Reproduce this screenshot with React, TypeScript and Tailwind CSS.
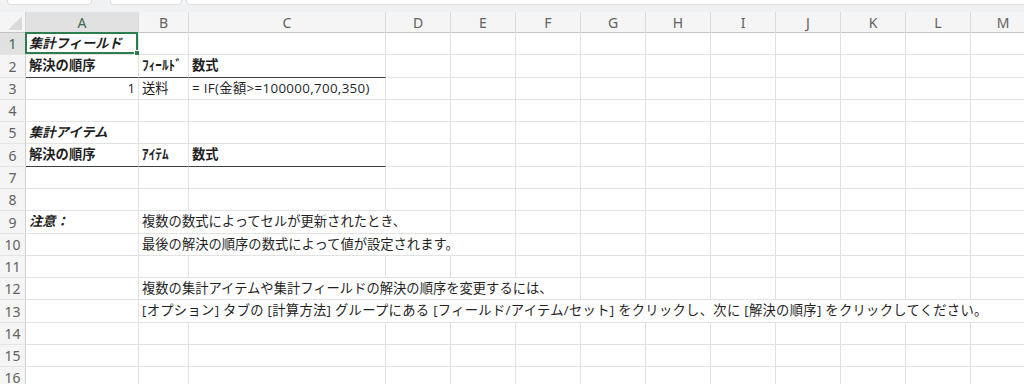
import React from 'react';

// One cell of the sheet: span = how many columns the content runs over
type Cell = { span?: number; text?: React.ReactNode; cls?: string; sel?: boolean };

interface SheetRow {
  h: number;
  cells: Cell[];
}

const COLS = ['A', 'B', 'C', 'D', 'E', 'F', 'G', 'H', 'I', 'J', 'K', 'L', 'M'];
const GRID = 'grid grid-cols-[26px_113px_50px_197px_repeat(10,65px)]';
const TOTAL = COLS.length;

const bi = 'font-bold italic';
const b = 'font-bold';
const thick = '!border-b-[#3f3f3f]';

const rows: SheetRow[] = [
  { h: 22, cells: [{ text: '集計フィールド', cls: bi, sel: true }] },
  {
    h: 23,
    cells: [
      { text: '解決の順序', cls: `${b} ${thick}` },
      { text: 'ﾌｨｰﾙﾄﾞ', cls: `${b} ${thick}` },
      { text: '数式', cls: `${b} ${thick}` },
    ],
  },
  {
    h: 22,
    cells: [
      { text: '1', cls: 'justify-end pr-[3px]' },
      { text: '送料' },
      { text: '= IF(金額>=100000,700,350)', cls: 'tracking-[0.35px]' },
    ],
  },
  { h: 22, cells: [] },
  { h: 22, cells: [{ text: '集計アイテム', cls: bi }] },
  {
    h: 23,
    cells: [
      { text: '解決の順序', cls: `${b} ${thick}` },
      { text: 'ｱｲﾃﾑ', cls: `${b} ${thick}` },
      { text: '数式', cls: `${b} ${thick}` },
    ],
  },
  { h: 22, cells: [] },
  { h: 22, cells: [] },
  {
    h: 23,
    cells: [{ text: '注意：', cls: bi }, { span: 3, text: '複数の数式によってセルが更新されたとき、' }],
  },
  {
    h: 22,
    cells: [{}, { span: 4, text: '最後の解決の順序の数式によって値が設定されます。' }],
  },
  { h: 22, cells: [] },
  {
    h: 22,
    cells: [{}, { span: 5, text: '複数の集計アイテムや集計フィールドの解決の順序を変更するには、' }],
  },
  {
    h: 23,
    cells: [
      {},
      {
        span: 12,
        text: '[オプション] タブの [計算方法] グループにある [フィールド/アイテム/セット] をクリックし、次に [解決の順序] をクリックしてください。',
        cls: 'tracking-[0.3px]',
      },
    ],
  },
  { h: 22, cells: [] },
  { h: 22, cells: [] },
  { h: 22, cells: [] },
];

const spanCls: Record<number, string> = {
  1: 'col-span-1',
  3: 'col-span-3',
  4: 'col-span-4',
  5: 'col-span-5',
  12: 'col-span-12',
};

function fill(cells: Cell[]): Cell[] {
  const out = [...cells];
  let used = out.reduce((n, c) => n + (c.span ?? 1), 0);
  while (used < TOTAL) {
    out.push({});
    used++;
  }
  return out;
}

const App = () => {
  return (
    <div
      className="w-[1024px] h-[384px] overflow-hidden bg-white text-[#1f1f1f]"
      style={{ fontFamily: '"Open Sans", "Noto Sans CJK JP", sans-serif' }}
    >
      {/* toolbar remnants at top */}
      <div className="h-[12px] bg-[#f0f1f3] flex items-start">
        <div className="ml-[7px] w-[85px] h-[5px] bg-white rounded-b-[4px] border border-t-0 border-[#dedede]" />
        <div className="ml-[18px] w-[72px] h-[5px] bg-white rounded-b-[4px] border border-t-0 border-[#dedede]" />
        <div className="ml-[4px] flex-1 h-[5px] bg-white rounded-bl-[4px] border border-t-0 border-r-0 border-[#dedede]" />
      </div>

      {/* column headers */}
      <div className={`${GRID} h-[21px] bg-[#f5f5f5] border-b border-[#c4c4c4]`}>
        <div className="relative border-r border-[#d4d4d4]">
          <svg className="absolute right-[3px] bottom-[3px]" width="14" height="14" viewBox="0 0 14 14">
            <polygon points="14,0 14,14 0,14" fill="#d9d9d9" />
          </svg>
        </div>
        {COLS.map((c, i) => (
          <div
            key={c}
            className={`flex items-center justify-center border-r border-[#dcdcdc] text-[14px] ${
              i === 0 ? 'bg-[#e1e1e1] text-[#3c6a4d]' : 'text-[#616161]'
            }`}
            style={{ fontFamily: '"Noto Sans", sans-serif' }}
          >
            {c}
          </div>
        ))}
      </div>

      {/* rows */}
      {rows.map((row, r) => (
        <div key={r} className={GRID} style={{ height: row.h }}>
          <div
            className={`flex items-center justify-center border-r border-b border-r-[#cfcfcf] border-b-[#e4e4e4] text-[14px] ${
              r === 0 ? 'bg-[#e1e1e1] text-[#3c6a4d]' : 'bg-[#f5f5f5] text-[#616161]'
            }`}
            style={{ fontFamily: '"Noto Sans", sans-serif' }}
          >
            {r + 1}
          </div>
          {fill(row.cells).map((cell, i) => (
            <div
              key={i}
              className={`relative flex items-center pl-[3px] whitespace-nowrap overflow-visible text-[13.3px] border-r border-b border-[#e2e2e2] ${
                spanCls[cell.span ?? 1]
              } ${cell.cls ?? ''}`}
            >
              {cell.text}
              {cell.sel && (
                <div className="absolute -left-[1px] -top-[1px] -right-[0px] -bottom-[0px] border-2 border-[#2e7d4f]">
                  <div className="absolute -right-[4px] -bottom-[4px] w-[6px] h-[6px] bg-[#2e7d4f] border border-white" />
                </div>
              )}
            </div>
          ))}
        </div>
      ))}
    </div>
  );
};

export default App;
